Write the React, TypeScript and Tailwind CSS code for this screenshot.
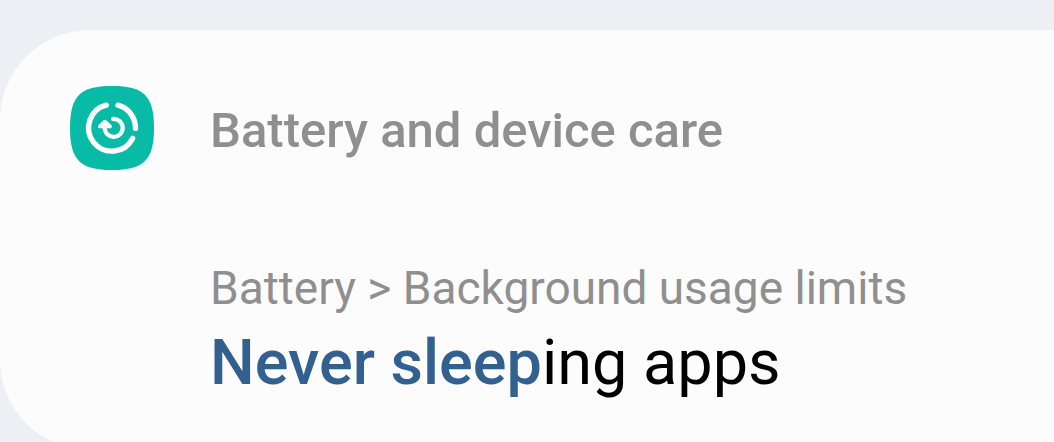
function DeviceCareIcon() {
  return (
    <svg viewBox="0 0 84 84" className="size-21 shrink-0" fill="none" aria-hidden="true">
      <path
        d="M42 0C74 0 84 10 84 42C84 74 74 84 42 84C10 84 0 74 0 42C0 10 10 0 42 0Z"
        fill="#07bba7"
      />
      <g stroke="#fcfcfc" strokeLinecap="round" strokeLinejoin="round">
        <path d="M36.200 19.200A23.300 23.300 0 1 0 62.600 52.400" strokeWidth="5.400" />
        <path d="M48 19.200A23.500 23.500 0 0 1 65.500 42.400" strokeWidth="5.400" />
        <path d="M43 32.900A9 9 0 1 1 34.700 42" strokeWidth="4.200" />
        <path d="M29.800 40.400L34.900 35.700L40 40.400Z" strokeWidth="3.800" fill="#fcfcfc" />
      </g>
    </svg>
  );
}

export default function App() {
  return (
    <main className="h-screen overflow-hidden bg-[#eeeff4] pt-[30px] font-[Roboto,sans-serif]">
      <section className="min-h-[420px] rounded-l-[90px] bg-[#fcfcfc] pt-14 pl-[70px]">
        <header className="flex items-center gap-14">
          <DeviceCareIcon />
          <h1 className="pt-1.5 text-[49px] leading-[56px] font-medium whitespace-nowrap text-[#8f8f8f]">
            Battery and device care
          </h1>
        </header>
        <a href="#never-sleeping-apps" className="mt-[90px] block pl-35 whitespace-nowrap">
          <p className="text-[46px] leading-[56px] text-[#8f8f8f]">Battery &gt; Background usage limits</p>
          <h2 className="mt-2 text-[63px] leading-[78px] font-normal text-black">
            <mark className="bg-transparent font-medium text-[#33618f]">Never sleep</mark>ing apps
          </h2>
        </a>
      </section>
    </main>
  );
}
